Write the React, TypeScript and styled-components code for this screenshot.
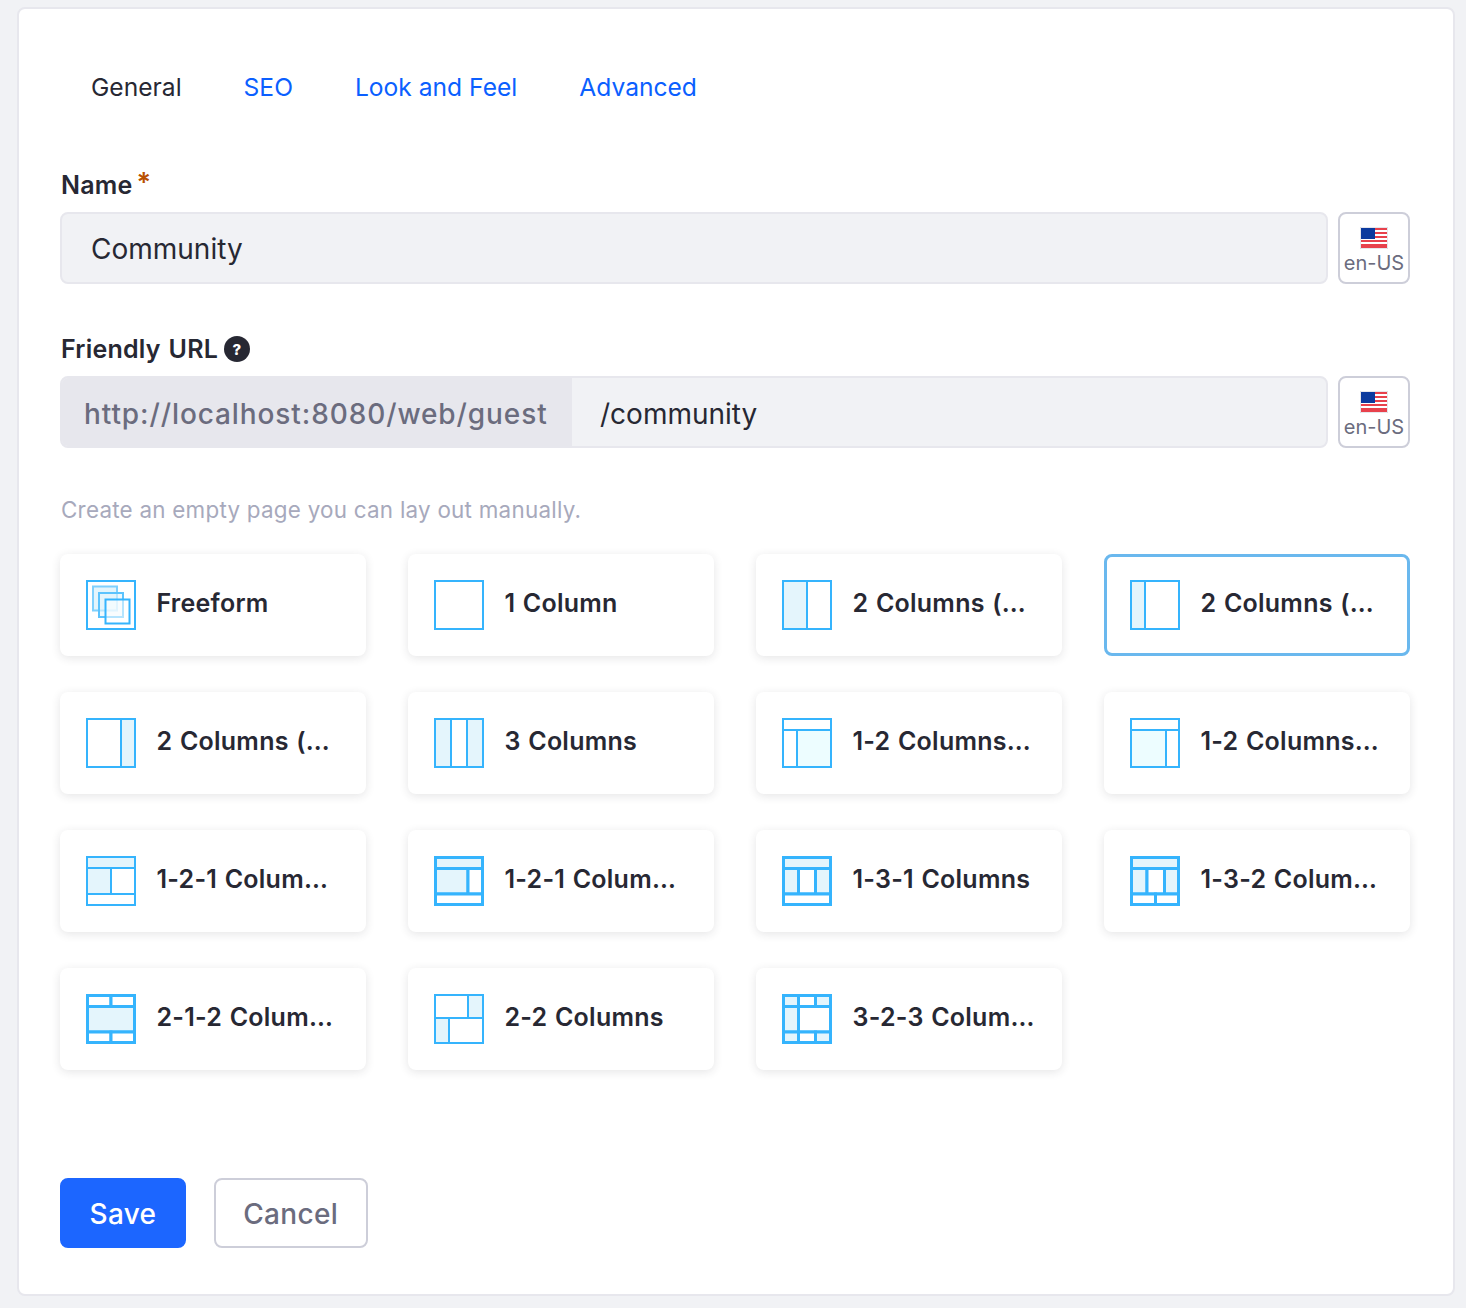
import { FC } from 'react';
import styled, { createGlobalStyle } from 'styled-components';

const GlobalStyle = createGlobalStyle`
    * { box-sizing: border-box; }
    body {
        margin: 0;
        background: #f1f2f5;
        font-family: Inter, "Noto Sans", sans-serif;
        color: #272833;
    }
`;

const Page = styled.div`
    padding: 7px 11px 12px 17px;
`;

const Sheet = styled.form`
    background: #fff;
    border: 2px solid #e7e7ed;
    border-radius: 8px;
    padding: 54px 43px 46px 41px;
`;

const Tabs = styled.nav`
    display: flex;
    height: 48px;
    margin-bottom: 59px;
`;

const Tab = styled.a<{ $active?: boolean }>`
    display: flex;
    align-items: center;
    padding: 0 31px;
    font-size: 24.6px;
    color: ${(p) => (p.$active ? '#272833' : '#0b5fff')};
    text-decoration: none;
`;

const Label = styled.label`
    display: flex;
    align-items: center;
    gap: 6px;
    height: 30px;
    margin-bottom: 12px;
    padding-left: 1px;
    font-size: 25px;
    font-weight: 600;
    letter-spacing: 0.2px;
    word-spacing: 1.5px;
`;

const Required = styled.span`
    color: #b95000;
    font-size: 27px;
    font-weight: 600;
    line-height: 1;
    margin: -6px 0 0 -2px;
`;

const HelpBadge = styled.span`
    display: flex;
    align-items: center;
    justify-content: center;
    width: 26px;
    height: 26px;
    border-radius: 50%;
    background: #272833;
    color: #fff;
    font-size: 15px;
    font-weight: 800;
`;

const FieldRow = styled.div`
    display: grid;
    grid-template-columns: 1fr 72px;
    gap: 10px;
    margin-bottom: 50px;
`;

const InputGroup = styled.div`
    display: flex;
    height: 72px;
    background: #f1f2f5;
    border: 2px solid #e7e7ed;
    border-radius: 8px;
    overflow: hidden;
`;

const Prefix = styled.span`
    display: flex;
    align-items: center;
    width: 510px;
    flex: none;
    padding: 3px 0 0 22px;
    background: #e7e7ed;
    color: #6b6c7e;
    font-size: 28px;
    font-weight: 500;
    letter-spacing: 0.9px;
    white-space: nowrap;
`;

const TextInput = styled.input<{ $indent: number; $drop: number }>`
    flex: 1;
    min-width: 0;
    border: 0;
    outline: 0;
    background: transparent;
    padding: ${(p) => p.$drop}px 0 0 ${(p) => p.$indent}px;
    font: 400 28px Inter, "Noto Sans", sans-serif;
    color: #272833;
`;

const LocaleButton = styled.button`
    display: flex;
    flex-direction: column;
    align-items: center;
    justify-content: center;
    gap: 2px;
    height: 72px;
    padding: 6px 0 0;
    background: #fff;
    border: 2px solid #cdced9;
    border-radius: 8px;
    color: #6b6c7e;
    font: 400 20px Inter, "Noto Sans", sans-serif;
`;

const Help = styled.p`
    height: 30px;
    margin: -3px 0 29px;
    padding-left: 1px;
    line-height: 30px;
    font-size: 22.4px;
    letter-spacing: 0.25px;
    color: #a7a9bc;
`;

const LayoutGrid = styled.div`
    display: grid;
    grid-template-columns: repeat(4, minmax(0, 1fr));
    gap: 36px 42px;
    margin-bottom: 108px;
`;

const LayoutCard = styled.div<{ $selected?: boolean }>`
    display: flex;
    align-items: center;
    gap: 20.5px;
    height: 102px;
    padding: 0 23px;
    background: #fff;
    border: 3px solid ${(p) => (p.$selected ? '#6ab8ee' : 'transparent')};
    border-radius: 8px;
    box-shadow: ${(p) => (p.$selected ? 'none' : '0 2px 10px rgba(39, 40, 51, 0.12)')};
`;

const LayoutName = styled.span`
    margin-top: -4px;
    font-size: 25px;
    font-weight: 600;
    letter-spacing: 0.25px;
    word-spacing: 1px;
    white-space: nowrap;
`;

const Actions = styled.div`
    display: flex;
    gap: 28px;
`;

const Button = styled.button<{ $primary?: boolean }>`
    height: 70px;
    padding: 2px 27.5px 0;
    border-radius: 8px;
    border: 2px solid ${(p) => (p.$primary ? '#1c66ff' : '#cdced9')};
    background: ${(p) => (p.$primary ? '#1c66ff' : '#fff')};
    color: ${(p) => (p.$primary ? '#fff' : '#6b6c7e')};
    font: 500 28px Inter, "Noto Sans", sans-serif;
    letter-spacing: 0.3px;
`;

const BLUE = '#35b4fd';
const TINT = '#e4f5fc';
const PALE = '#edfdff';

// x, y, w, h, fill
type Cell = [number, number, number, number, string?];

const Grid: FC<{ cells: Cell[]; weight?: number }> = ({ cells, weight = 2 }) => (
    <svg width='50' height='50' viewBox='0 0 50 50' style={{ flex: 'none' }}>
        {cells.map(([x, y, w, h, fill], i) => (
            <rect key={i} x={x} y={y} width={w} height={h} fill={fill || '#fff'} stroke={BLUE} strokeWidth={weight} />
        ))}
    </svg>
);

const FreeformIcon: FC = () => (
    <svg width='50' height='50' viewBox='0 0 50 50' style={{ flex: 'none' }}>
        <rect x='1' y='1' width='48' height='48' fill='#fff' stroke={BLUE} strokeWidth='2' />
        <rect x='7' y='6.5' width='24' height='24' fill='#e4f5fc' stroke='#7fd0fd' strokeWidth='2' />
        <rect x='13' y='13' width='24' height='24' fill='#e4f5fc' fillOpacity='0.6' stroke='#5cc3fd' strokeWidth='2' />
        <rect x='19.5' y='19.5' width='24' height='24' fill='#fff' fillOpacity='0.55' stroke={BLUE} strokeWidth='2' />
    </svg>
);

const Flag: FC = () => (
    <svg width='28' height='22' viewBox='0 0 28 22'>
        <rect width='28' height='22' fill='#fff' stroke='#cdced9' />
        {[1, 5, 9, 13, 17].map((y) => (
            <rect key={y} x='1' y={y} width='26' height='2' fill='#e8414c' />
        ))}
        <rect x='1' y='19' width='26' height='2' fill='#e8414c' />
        <rect x='1' y='1' width='14' height='11' fill='#0b3a9e' />
    </svg>
);

const Locale: FC = () => (
    <LocaleButton type='button'>
        <Flag />
        en-US
    </LocaleButton>
);

interface ILayout {
    name: string;
    selected?: boolean;
    icon: JSX.Element;
}

const layouts: ILayout[] = [
    { name: 'Freeform', icon: <FreeformIcon /> },
    { name: '1 Column', icon: <Grid cells={[[1, 1, 48, 48]]} /> },
    { name: '2 Columns (…', icon: <Grid cells={[[1, 1, 24, 48, TINT], [25, 1, 24, 48]]} /> },
    { name: '2 Columns (…', selected: true, icon: <Grid cells={[[1, 1, 14, 48, TINT], [15, 1, 34, 48]]} /> },
    { name: '2 Columns (…', icon: <Grid cells={[[1, 1, 34, 48], [35, 1, 14, 48, TINT]]} /> },
    { name: '3 Columns', icon: <Grid cells={[[1, 1, 16, 48, TINT], [17, 1, 16, 48], [33, 1, 16, 48, TINT]]} /> },
    { name: '1-2 Columns…', icon: <Grid cells={[[1, 1, 48, 11], [1, 12, 14, 37], [15, 12, 34, 37, PALE]]} /> },
    { name: '1-2 Columns…', icon: <Grid cells={[[1, 1, 48, 11], [1, 12, 35, 37, PALE], [36, 12, 13, 37]]} /> },
    { name: '1-2-1 Colum…', icon: <Grid cells={[[1, 1, 48, 11, TINT], [1, 12, 24, 26, TINT], [25, 12, 24, 26], [1, 38, 48, 11]]} /> },
    { name: '1-2-1 Colum…', icon: <Grid weight={3} cells={[[1.5, 1.5, 47, 11, TINT], [1.5, 12.5, 32.5, 25.5, TINT], [34, 12.5, 14.5, 25.5], [1.5, 38, 47, 10.5]]} /> },
    { name: '1-3-1 Columns', icon: <Grid weight={3} cells={[[1.5, 1.5, 47, 11, TINT], [1.5, 12.5, 15, 25.5, TINT], [16.5, 12.5, 17, 25.5], [33.5, 12.5, 15, 25.5, TINT], [1.5, 38, 47, 10.5]]} /> },
    { name: '1-3-2 Colum…', icon: <Grid weight={3} cells={[[1.5, 1.5, 47, 11, TINT], [1.5, 12.5, 15.5, 25.5, TINT], [17, 12.5, 17.5, 25.5], [34.5, 12.5, 14, 25.5, TINT], [1.5, 38, 24, 10.5], [25.5, 38, 23, 10.5]]} /> },
    { name: '2-1-2 Colum…', icon: <Grid weight={3} cells={[[1.5, 1.5, 23.5, 11], [25, 1.5, 23.5, 11], [1.5, 12.5, 47, 25.5, TINT], [1.5, 38, 23.5, 10.5], [25, 38, 23.5, 10.5]]} /> },
    { name: '2-2 Columns', icon: <Grid cells={[[1, 1, 33, 23], [34, 1, 15, 23, TINT], [1, 24, 14, 25, TINT], [15, 24, 34, 25]]} /> },
    { name: '3-2-3 Colum…', icon: <Grid weight={3} cells={[[1.5, 1.5, 15, 11, TINT], [16.5, 1.5, 17, 11], [33.5, 1.5, 15, 11, TINT], [1.5, 12.5, 15, 25.5, TINT], [16.5, 12.5, 32, 25.5], [1.5, 38, 15, 10.5, TINT], [16.5, 38, 17, 10.5], [33.5, 38, 15, 10.5, TINT]]} /> },
];

const App: FC = () => (
    <Page>
        <GlobalStyle />
        <Sheet>
            <Tabs>
                <Tab $active href='#general'>General</Tab>
                <Tab href='#seo'>SEO</Tab>
                <Tab href='#look'>Look and Feel</Tab>
                <Tab href='#advanced'>Advanced</Tab>
            </Tabs>

            <Label>
                Name <Required>*</Required>
            </Label>
            <FieldRow>
                <InputGroup>
                    <TextInput $indent={29} $drop={1} readOnly value='Community' />
                </InputGroup>
                <Locale />
            </FieldRow>

            <Label>
                Friendly URL <HelpBadge>?</HelpBadge>
            </Label>
            <FieldRow>
                <InputGroup>
                    <Prefix>http://localhost:8080/web/guest</Prefix>
                    <TextInput $indent={28} $drop={3} readOnly value='/community' />
                </InputGroup>
                <Locale />
            </FieldRow>

            <Help>Create an empty page you can lay out manually.</Help>

            <LayoutGrid>
                {layouts.map((layout, i) => (
                    <LayoutCard key={i} $selected={layout.selected}>
                        {layout.icon}
                        <LayoutName>{layout.name}</LayoutName>
                    </LayoutCard>
                ))}
            </LayoutGrid>

            <Actions>
                <Button $primary type='button'>Save</Button>
                <Button type='button'>Cancel</Button>
            </Actions>
        </Sheet>
    </Page>
);

export default App;
